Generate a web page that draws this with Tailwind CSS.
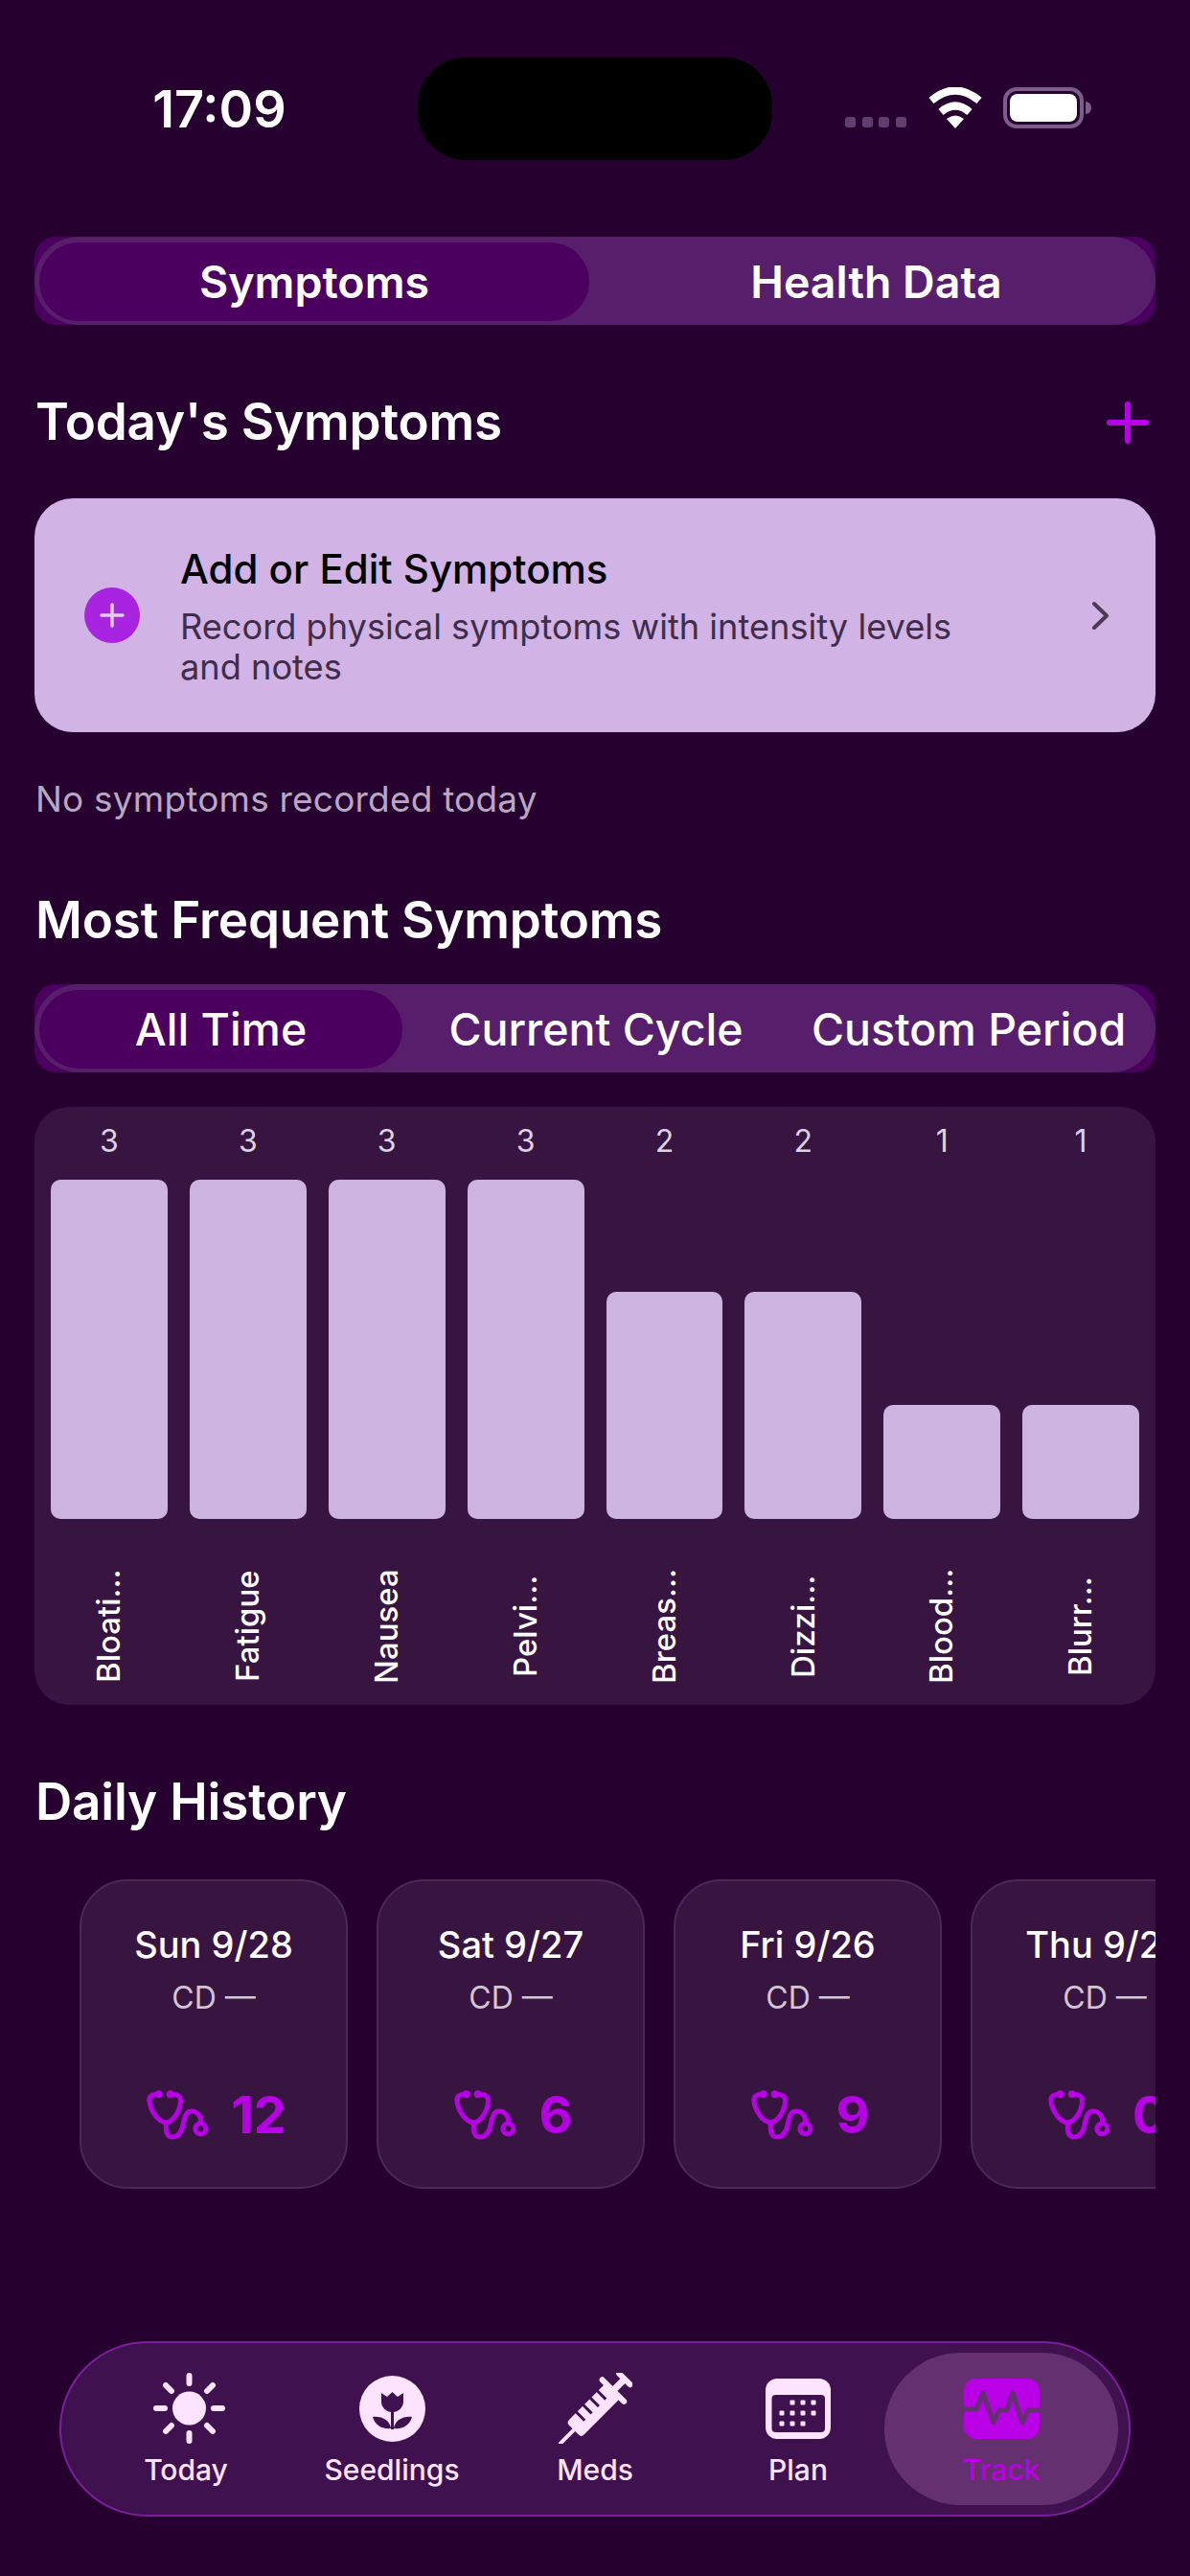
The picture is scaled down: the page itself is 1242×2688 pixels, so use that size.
<!DOCTYPE html>
<html lang="en">
<head>
<meta charset="UTF-8">
<title>Track</title>
<script src="https://cdn.jsdelivr.net/npm/@tailwindcss/browser@4"></script>
</head>
<body class="bg-[#26002f] text-white font-['Inter',sans-serif]">
<div class="w-[1242px] h-[2688px] overflow-hidden">

  <!-- status bar -->
  <header class="h-[247px] pt-[60px] flex items-start">
    <div class="w-[436px] h-[107px] pl-[22px] flex items-center justify-center text-[54px] font-semibold">17:09</div>
    <div class="w-[370px] h-[107px] rounded-[50px] bg-black"></div>
    <div class="h-[43px] mt-[31px] ml-[76px] flex items-start">
      <div class="flex gap-[6.5px] mt-[31px]">
        <span class="w-[11px] h-[11px] rounded-[3px] bg-[#5f3f70]"></span>
        <span class="w-[11px] h-[11px] rounded-[3px] bg-[#5f3f70]"></span>
        <span class="w-[11px] h-[11px] rounded-[3px] bg-[#5f3f70]"></span>
        <span class="w-[11px] h-[11px] rounded-[3px] bg-[#5f3f70]"></span>
      </div>
      <svg class="ml-[22px]" width="58" height="43" viewBox="0 0 58 43" fill="none">
        <path d="M4 14Q29 -7 54 14" stroke="#fff" stroke-width="8"/>
        <path d="M14 26Q29 13 44 26" stroke="#fff" stroke-width="8"/>
        <path d="M20 33Q29 26 38 33L29 43Z" fill="#fff"/>
      </svg>
      <div class="ml-[21px] w-[84px] h-[43px] rounded-[14px] border-[4px] border-[#7a5e88] p-[3px]">
        <div class="w-full h-full rounded-[8px] bg-white"></div>
      </div>
      <div class="w-[6px] h-[13px] mt-[15px] ml-[2px] rounded-r-full bg-[#7a5e88]"></div>
    </div>
  </header>

  <main class="pl-[36px] w-[1206px]">
    <div class="h-[92px] rounded-[22px] bg-[#4b0060] overflow-hidden">
      <div class="h-full rounded-[46px] bg-[#571f6b] flex items-center pl-[5px] text-[46.5px] font-semibold">
        <div class="w-[574px] h-[82px] mt-[2px] pt-[1px] rounded-[41px] bg-[#4b0060] flex items-center justify-center">Symptoms</div>
        <div class="flex-1 text-center pl-[8px] pt-[3px]">Health Data</div>
      </div>
    </div>

    <div class="mt-[75px] h-[52px] pt-[2px] flex items-center justify-between text-[53px] tracking-[-0.2px] font-semibold">
      <h2 class="pl-[1px]">Today's Symptoms</h2>
      <svg class="mr-[7px]" width="44" height="44" viewBox="0 0 44 44"><path d="M22 3V41M3 22H41" stroke="#b700e6" stroke-width="6" stroke-linecap="round"/></svg>
    </div>

    <div class="mt-[54px] h-[244px] rounded-[40px] bg-[#d1b3e5] flex items-center pl-[52px] pr-[48px]">
      <div class="w-[58px] h-[58px] rounded-full bg-[#a824e0] flex items-center justify-center">
        <svg width="26" height="26" viewBox="0 0 26 26"><path d="M13 2V24M2 13H24" stroke="#e4c8f2" stroke-width="3.5" stroke-linecap="round"/></svg>
      </div>
      <div class="ml-[42px] w-[860px]">
        <div class="text-[42px] leading-[52px] font-medium text-black">Add or Edit Symptoms</div>
        <div class="mt-[13px] text-[36.2px] leading-[42px] text-[#3f2d4b]">Record physical symptoms with intensity levels and notes</div>
      </div>
      <svg class="ml-auto" width="19" height="31" viewBox="0 0 19 31" fill="none"><path d="M3 3L16 15.5L3 28" stroke="#4a3a55" stroke-width="4" stroke-linecap="round" stroke-linejoin="round"/></svg>
    </div>

    <p class="mt-[48px] h-[44px] pl-[1px] flex items-center text-[37px] tracking-[0.2px] text-[#b9a8c2]">No symptoms recorded today</p>

    <h2 class="mt-[78px] h-[52px] pt-[2px] pl-[1px] flex items-center text-[53px] tracking-[-0.2px] font-semibold">Most Frequent Symptoms</h2>

    <div class="mt-[41px] h-[92px] rounded-[22px] bg-[#4b0060] overflow-hidden">
      <div class="h-full rounded-[46px] bg-[#571f6b] flex items-center pl-[5px] text-[46.5px] font-medium">
        <div class="w-[379px] h-[82px] mt-[2px] pt-[2px] rounded-[41px] bg-[#4b0060] flex items-center justify-center">All Time</div>
        <div class="w-[404px] text-center pt-[4px]">Current Cycle</div>
        <div class="flex-1 text-center pr-[8px] pt-[4px]">Custom Period</div>
      </div>
    </div>

    <!-- chart -->
    <section class="mt-[36px] h-[624px] rounded-[36px] bg-[#381440] px-[17px] grid grid-cols-8 gap-x-[23px]">
      <div class="flex flex-col items-center pt-[16px]">
        <div class="h-[40px] flex items-center text-[32px] text-[#dcd2e2]">3</div>
        <div class="h-[374px] w-full flex items-end"><div class="w-full h-[354px] rounded-[10px] bg-[#cdb4e0]"></div></div>
        <div class="mt-[30px] h-[164px] flex items-center justify-center text-[33px] font-medium [writing-mode:vertical-rl] rotate-180">Bloati…</div>
      </div>
      <div class="flex flex-col items-center pt-[16px]">
        <div class="h-[40px] flex items-center text-[32px] text-[#dcd2e2]">3</div>
        <div class="h-[374px] w-full flex items-end"><div class="w-full h-[354px] rounded-[10px] bg-[#cdb4e0]"></div></div>
        <div class="mt-[30px] h-[164px] flex items-center justify-center text-[33px] font-medium [writing-mode:vertical-rl] rotate-180">Fatigue</div>
      </div>
      <div class="flex flex-col items-center pt-[16px]">
        <div class="h-[40px] flex items-center text-[32px] text-[#dcd2e2]">3</div>
        <div class="h-[374px] w-full flex items-end"><div class="w-full h-[354px] rounded-[10px] bg-[#cdb4e0]"></div></div>
        <div class="mt-[30px] h-[164px] flex items-center justify-center text-[33px] font-medium [writing-mode:vertical-rl] rotate-180">Nausea</div>
      </div>
      <div class="flex flex-col items-center pt-[16px]">
        <div class="h-[40px] flex items-center text-[32px] text-[#dcd2e2]">3</div>
        <div class="h-[374px] w-full flex items-end"><div class="w-full h-[354px] rounded-[10px] bg-[#cdb4e0]"></div></div>
        <div class="mt-[30px] h-[164px] flex items-center justify-center text-[33px] font-medium [writing-mode:vertical-rl] rotate-180">Pelvi…</div>
      </div>
      <div class="flex flex-col items-center pt-[16px]">
        <div class="h-[40px] flex items-center text-[32px] text-[#dcd2e2]">2</div>
        <div class="h-[374px] w-full flex items-end"><div class="w-full h-[237px] rounded-[10px] bg-[#cdb4e0]"></div></div>
        <div class="mt-[30px] h-[164px] flex items-center justify-center text-[33px] font-medium [writing-mode:vertical-rl] rotate-180">Breas…</div>
      </div>
      <div class="flex flex-col items-center pt-[16px]">
        <div class="h-[40px] flex items-center text-[32px] text-[#dcd2e2]">2</div>
        <div class="h-[374px] w-full flex items-end"><div class="w-full h-[237px] rounded-[10px] bg-[#cdb4e0]"></div></div>
        <div class="mt-[30px] h-[164px] flex items-center justify-center text-[33px] font-medium [writing-mode:vertical-rl] rotate-180">Dizzi…</div>
      </div>
      <div class="flex flex-col items-center pt-[16px]">
        <div class="h-[40px] flex items-center text-[32px] text-[#dcd2e2]">1</div>
        <div class="h-[374px] w-full flex items-end"><div class="w-full h-[119px] rounded-[10px] bg-[#cdb4e0]"></div></div>
        <div class="mt-[30px] h-[164px] flex items-center justify-center text-[33px] font-medium [writing-mode:vertical-rl] rotate-180">Blood…</div>
      </div>
      <div class="flex flex-col items-center pt-[16px]">
        <div class="h-[40px] flex items-center text-[32px] text-[#dcd2e2]">1</div>
        <div class="h-[374px] w-full flex items-end"><div class="w-full h-[119px] rounded-[10px] bg-[#cdb4e0]"></div></div>
        <div class="mt-[30px] h-[164px] flex items-center justify-center text-[33px] font-medium [writing-mode:vertical-rl] rotate-180">Blurr…</div>
      </div>
    </section>

    <h2 class="mt-[75px] h-[52px] pt-[2px] pl-[1px] flex items-center text-[53px] tracking-[-0.2px] font-semibold">Daily History</h2>

    <div class="mt-[55px] -ml-[36px] pl-[83px] flex gap-[30px] overflow-hidden">
      <article class="w-[280px] h-[323px] shrink-0 rounded-[50px] border-2 border-[#4a2a55] bg-[#381440] flex flex-col items-center pt-[43px]">
        <div class="h-[46px] flex items-center text-[38px] font-medium">Sun 9/28</div>
        <div class="mt-[13px] h-[40px] flex items-center text-[32px] text-[#d0c6d6]">CD —</div>
        <div class="mt-[71px] ml-[6px] h-[60px] flex items-center gap-[23px] text-[54px] font-bold text-[#b700e6]">
          <svg width="65" height="53" viewBox="0 0 65 53" fill="none" stroke="#b700e6" stroke-width="5" stroke-linecap="round"><path d="M12.7 5.3C6 5.3 2 7 3 13C4 22 12 34.7 20.3 34.7C28 34.7 35 22 35.5 13C36 7 32 5.3 24.7 5.3"/><path d="M20.3 34.7V41C20.3 47 23 50 27 50C34 50 37 44 38.5 35C40 27 42 23 47 23C53 23 57 28 57 35"/><circle cx="56.3" cy="41.3" r="5.5"/><circle cx="12.7" cy="5.3" r="1.5" fill="#b700e6"/><circle cx="24.7" cy="5.3" r="1.5" fill="#b700e6"/></svg>
          <span>12</span>
        </div>
      </article>
      <article class="w-[280px] h-[323px] shrink-0 rounded-[50px] border-2 border-[#4a2a55] bg-[#381440] flex flex-col items-center pt-[43px]">
        <div class="h-[46px] flex items-center text-[38px] font-medium">Sat 9/27</div>
        <div class="mt-[13px] h-[40px] flex items-center text-[32px] text-[#d0c6d6]">CD —</div>
        <div class="mt-[71px] ml-[6px] h-[60px] flex items-center gap-[23px] text-[54px] font-bold text-[#b700e6]">
          <svg width="65" height="53" viewBox="0 0 65 53" fill="none" stroke="#b700e6" stroke-width="5" stroke-linecap="round"><path d="M12.7 5.3C6 5.3 2 7 3 13C4 22 12 34.7 20.3 34.7C28 34.7 35 22 35.5 13C36 7 32 5.3 24.7 5.3"/><path d="M20.3 34.7V41C20.3 47 23 50 27 50C34 50 37 44 38.5 35C40 27 42 23 47 23C53 23 57 28 57 35"/><circle cx="56.3" cy="41.3" r="5.5"/><circle cx="12.7" cy="5.3" r="1.5" fill="#b700e6"/><circle cx="24.7" cy="5.3" r="1.5" fill="#b700e6"/></svg>
          <span>6</span>
        </div>
      </article>
      <article class="w-[280px] h-[323px] shrink-0 rounded-[50px] border-2 border-[#4a2a55] bg-[#381440] flex flex-col items-center pt-[43px]">
        <div class="h-[46px] flex items-center text-[38px] font-medium">Fri 9/26</div>
        <div class="mt-[13px] h-[40px] flex items-center text-[32px] text-[#d0c6d6]">CD —</div>
        <div class="mt-[71px] ml-[6px] h-[60px] flex items-center gap-[23px] text-[54px] font-bold text-[#b700e6]">
          <svg width="65" height="53" viewBox="0 0 65 53" fill="none" stroke="#b700e6" stroke-width="5" stroke-linecap="round"><path d="M12.7 5.3C6 5.3 2 7 3 13C4 22 12 34.7 20.3 34.7C28 34.7 35 22 35.5 13C36 7 32 5.3 24.7 5.3"/><path d="M20.3 34.7V41C20.3 47 23 50 27 50C34 50 37 44 38.5 35C40 27 42 23 47 23C53 23 57 28 57 35"/><circle cx="56.3" cy="41.3" r="5.5"/><circle cx="12.7" cy="5.3" r="1.5" fill="#b700e6"/><circle cx="24.7" cy="5.3" r="1.5" fill="#b700e6"/></svg>
          <span>9</span>
        </div>
      </article>
      <article class="w-[280px] h-[323px] shrink-0 rounded-[50px] border-2 border-[#4a2a55] bg-[#381440] flex flex-col items-center pt-[43px]">
        <div class="h-[46px] flex items-center text-[38px] font-medium">Thu 9/25</div>
        <div class="mt-[13px] h-[40px] flex items-center text-[32px] text-[#d0c6d6]">CD —</div>
        <div class="mt-[71px] ml-[6px] h-[60px] flex items-center gap-[23px] text-[54px] font-bold text-[#b700e6]">
          <svg width="65" height="53" viewBox="0 0 65 53" fill="none" stroke="#b700e6" stroke-width="5" stroke-linecap="round"><path d="M12.7 5.3C6 5.3 2 7 3 13C4 22 12 34.7 20.3 34.7C28 34.7 35 22 35.5 13C36 7 32 5.3 24.7 5.3"/><path d="M20.3 34.7V41C20.3 47 23 50 27 50C34 50 37 44 38.5 35C40 27 42 23 47 23C53 23 57 28 57 35"/><circle cx="56.3" cy="41.3" r="5.5"/><circle cx="12.7" cy="5.3" r="1.5" fill="#b700e6"/><circle cx="24.7" cy="5.3" r="1.5" fill="#b700e6"/></svg>
          <span>0</span>
        </div>
      </article>
    </div>
  </main>

  <!-- tab bar -->
  <nav class="mt-[159px] ml-[62px] w-[1118px] h-[183px] rounded-[92px] border-2 border-[#7c1f9c] bg-[#40114f] flex items-center pl-[27px] text-[30px] font-medium text-[#fce4ff]">
    <div class="w-[212px] h-[159px] flex flex-col items-center pt-[21px]">
      <div class="h-[74px] flex items-center justify-center">
        <svg width="75" height="74" viewBox="0 0 75 74" fill="none" stroke="#fce4ff" stroke-width="6" stroke-linecap="round"><circle cx="37.5" cy="37" r="17.5" fill="#fce4ff" stroke="none"/><path d="M37.5 3V11M37.5 63V71M3 37H12M63 37H72M13 13L19 19M56 19L62 13M13 61L19 55M56 55L62 61"/></svg>
      </div>
      <div class="mt-[9px] mr-[6px] h-[36px] flex items-center">Today</div>
    </div>
    <div class="w-[212px] h-[159px] flex flex-col items-center pt-[21px]">
      <div class="h-[74px] flex items-center justify-center">
        <svg width="69" height="69" viewBox="0 0 69 69"><circle cx="34.5" cy="34.5" r="34.5" fill="#fce4ff"/><path d="M23 18L29 22L34.5 17L40 22L46 18V27C46 33 41 38 34.5 38C28 38 23 33 23 27Z" fill="#40114f"/><path d="M34.5 36V56" stroke="#40114f" stroke-width="3"/><path d="M14 43C24 42 32 47 33 55C23 56 16 51 14 43Z" fill="#40114f"/><path d="M55 43C45 42 37 47 36 55C46 56 53 51 55 43Z" fill="#40114f"/></svg>
      </div>
      <div class="mt-[9px] h-[36px] flex items-center">Seedlings</div>
    </div>
    <div class="w-[212px] h-[159px] flex flex-col items-center pt-[21px]">
      <div class="h-[74px] flex items-center justify-center">
        <svg width="77" height="74" viewBox="0 0 77 74"><g transform="translate(35 40.5) rotate(-45)"><path d="M-48 0H-26" stroke="#fce4ff" stroke-width="4" stroke-linecap="round"/><path d="M-27 -7Q-27 -11 -23 -11H31V11H-23Q-27 11 -27 7Z" fill="#fce4ff"/><path d="M-12 -13V1M-1.6 -13V1M8.8 -13V1M19.2 -13V1" stroke="#40114f" stroke-width="3"/><path d="M31 -16V16" stroke="#fce4ff" stroke-width="6" stroke-linecap="round"/><path d="M31 0H48" stroke="#fce4ff" stroke-width="7"/><path d="M48 -8V8" stroke="#fce4ff" stroke-width="6" stroke-linecap="round"/></g></svg>
      </div>
      <div class="mt-[9px] h-[36px] flex items-center">Meds</div>
    </div>
    <div class="w-[212px] h-[159px] flex flex-col items-center pt-[21px]">
      <div class="h-[74px] flex items-center justify-center">
        <svg width="68" height="63" viewBox="0 0 68 63"><rect width="68" height="63" rx="12" fill="#fce4ff"/><rect x="6.5" y="17" width="55.5" height="39" rx="4" fill="#40114f"/><g fill="#fce4ff"><rect x="25.5" y="22.5" width="5" height="5" rx="1"/><rect x="36.5" y="22.5" width="5" height="5" rx="1"/><rect x="47.5" y="22.5" width="5" height="5" rx="1"/><rect x="14.5" y="33.5" width="5" height="5" rx="1"/><rect x="25.5" y="33.5" width="5" height="5" rx="1"/><rect x="36.5" y="33.5" width="5" height="5" rx="1"/><rect x="47.5" y="33.5" width="5" height="5" rx="1"/><rect x="14.5" y="44.5" width="5" height="5" rx="1"/><rect x="25.5" y="44.5" width="5" height="5" rx="1"/><rect x="36.5" y="44.5" width="5" height="5" rx="1"/></g></svg>
      </div>
      <div class="mt-[9px] h-[36px] flex items-center">Plan</div>
    </div>
    <div class="-ml-[16px] w-[244px] h-[159px] rounded-[80px] bg-[#653070] flex flex-col items-center pt-[21px] text-[#b900e6]">
      <div class="h-[74px] flex items-center justify-center">
        <svg width="79" height="63" viewBox="0 0 79 63" fill="none"><rect width="79" height="63" rx="13" fill="#b900e6"/><path d="M0 32H13L20 15L31 46L37 33H45L51 15L61 46L67 33H79" stroke="#653070" stroke-width="5" stroke-linejoin="round"/></svg>
      </div>
      <div class="mt-[9px] h-[36px] flex items-center">Track</div>
    </div>
  </nav>
</div>
</body>
</html>
